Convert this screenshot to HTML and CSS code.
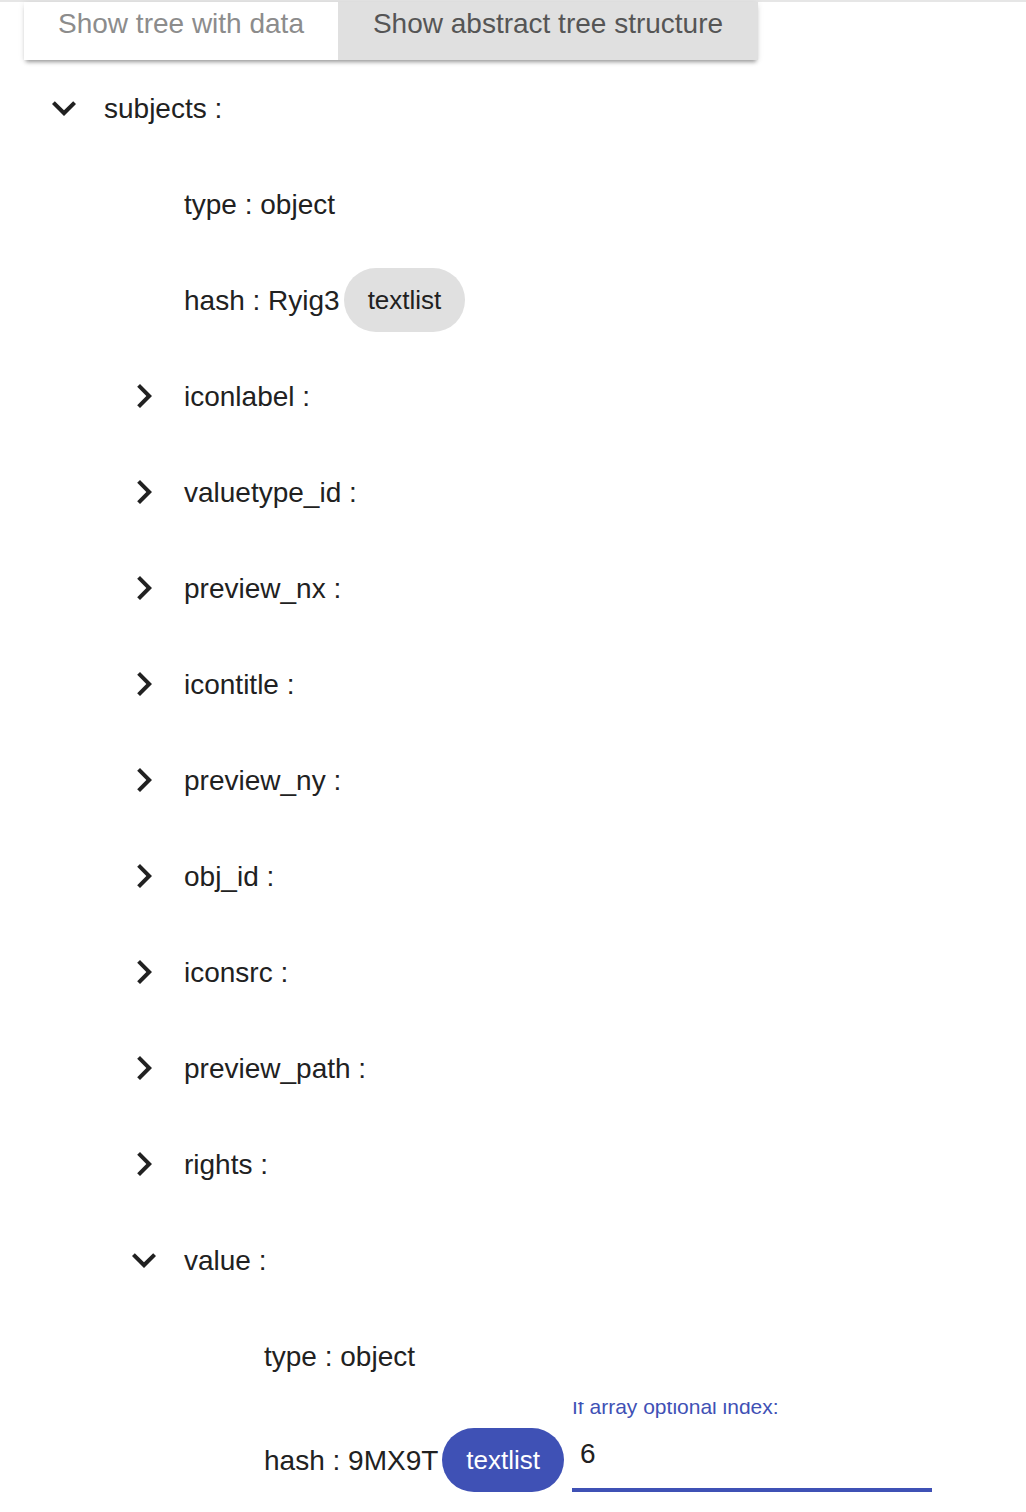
FILE: index.html
```html
<!DOCTYPE html>
<html lang="en">
<head>
<meta charset="utf-8">
<title>Tree</title>
<link rel="stylesheet" href="styles.css">
</head>
<body>
<div class="topband"></div>
<div class="tabs">
  <div class="tab tab-data">Show tree with data</div>
  <div class="tab tab-abstract">Show abstract tree structure</div>
</div>
<ul class="tree">
  <li>
    <div class="row"><span class="toggle"><svg viewBox="0 0 24 24" width="48" height="48"><path d="M16.59 8.59L12 13.17 7.41 8.59 6 10l6 6 6-6z"/></svg></span><span class="label">subjects :</span></div>
    <ul class="children">
      <li><div class="row"><span class="toggle"></span><span class="label">type : object</span></div></li>
      <li><div class="row"><span class="toggle"></span><span class="label">hash : Ryig3</span><span class="chip chip-grey">textlist</span></div></li>
      <li><div class="row"><span class="toggle"><svg viewBox="0 0 24 24" width="48" height="48"><path d="M10 6L8.59 7.41 13.17 12l-4.58 4.59L10 18l6-6z"/></svg></span><span class="label">iconlabel :</span></div></li>
      <li><div class="row"><span class="toggle"><svg viewBox="0 0 24 24" width="48" height="48"><path d="M10 6L8.59 7.41 13.17 12l-4.58 4.59L10 18l6-6z"/></svg></span><span class="label">valuetype_id :</span></div></li>
      <li><div class="row"><span class="toggle"><svg viewBox="0 0 24 24" width="48" height="48"><path d="M10 6L8.59 7.41 13.17 12l-4.58 4.59L10 18l6-6z"/></svg></span><span class="label">preview_nx :</span></div></li>
      <li><div class="row"><span class="toggle"><svg viewBox="0 0 24 24" width="48" height="48"><path d="M10 6L8.59 7.41 13.17 12l-4.58 4.59L10 18l6-6z"/></svg></span><span class="label">icontitle :</span></div></li>
      <li><div class="row"><span class="toggle"><svg viewBox="0 0 24 24" width="48" height="48"><path d="M10 6L8.59 7.41 13.17 12l-4.58 4.59L10 18l6-6z"/></svg></span><span class="label">preview_ny :</span></div></li>
      <li><div class="row"><span class="toggle"><svg viewBox="0 0 24 24" width="48" height="48"><path d="M10 6L8.59 7.41 13.17 12l-4.58 4.59L10 18l6-6z"/></svg></span><span class="label">obj_id :</span></div></li>
      <li><div class="row"><span class="toggle"><svg viewBox="0 0 24 24" width="48" height="48"><path d="M10 6L8.59 7.41 13.17 12l-4.58 4.59L10 18l6-6z"/></svg></span><span class="label">iconsrc :</span></div></li>
      <li><div class="row"><span class="toggle"><svg viewBox="0 0 24 24" width="48" height="48"><path d="M10 6L8.59 7.41 13.17 12l-4.58 4.59L10 18l6-6z"/></svg></span><span class="label">preview_path :</span></div></li>
      <li><div class="row"><span class="toggle"><svg viewBox="0 0 24 24" width="48" height="48"><path d="M10 6L8.59 7.41 13.17 12l-4.58 4.59L10 18l6-6z"/></svg></span><span class="label">rights :</span></div></li>
      <li>
        <div class="row"><span class="toggle"><svg viewBox="0 0 24 24" width="48" height="48"><path d="M16.59 8.59L12 13.17 7.41 8.59 6 10l6 6 6-6z"/></svg></span><span class="label">value :</span></div>
        <ul class="children">
          <li><div class="row"><span class="toggle"></span><span class="label">type : object</span></div></li>
          <li>
            <div class="row row-tall"><span class="toggle"></span><span class="label">hash : 9MX9T</span><span class="chip chip-blue">textlist</span>
              <div class="textfield">
                <label class="tf-label">If array optional index:</label>
                <div class="tf-input">6</div>
                <div class="tf-underline"></div>
              </div>
            </div>
          </li>
        </ul>
      </li>
    </ul>
  </li>
</ul>
</body>
</html>
```

FILE: styles.css
```css
html, body {
  margin: 0;
  padding: 0;
  background: #ffffff;
}
body {
  font-family: "Liberation Sans", Arial, Helvetica, sans-serif;
  color: #212121;
  overflow: hidden;
}
.topband {
  height: 2px;
  background: #e6e6e6;
}
.tabs {
  display: flex;
  margin-left: 24px;
  width: 734px;
  height: 58px;
  background: #ffffff;
  box-shadow: 0 4px 4px -2px rgba(0, 0, 0, 0.35), 0 1px 6px rgba(0, 0, 0, 0.10);
}
.tab {
  box-sizing: border-box;
  height: 58px;
  padding-top: 7px;
  font-size: 28px;
  line-height: 30px;
  text-align: center;
  white-space: nowrap;
}
.tab-data {
  width: 314px;
  background: #ffffff;
  color: #8c8c8c;
}
.tab-abstract {
  width: 420px;
  background: #e0e0e0;
  color: #555555;
}
.tree {
  list-style: none;
  margin: 0;
  padding: 0 0 0 40px;
}
.children {
  list-style: none;
  margin: 0;
  padding: 0 0 0 80px;
}
.row {
  display: flex;
  align-items: center;
  height: 96px;
  white-space: nowrap;
}
.row-tall {
  height: 112px;
}
.toggle {
  display: flex;
  align-items: center;
  justify-content: center;
  width: 48px;
  height: 48px;
  margin-right: 16px;
  flex: none;
}
.toggle svg {
  fill: #212121;
  display: block;
}
.label {
  font-size: 28px;
  line-height: 34px;
  padding-top: 2px;
}
.chip {
  display: inline-flex;
  align-items: center;
  box-sizing: border-box;
  height: 64px;
  border-radius: 32px;
  padding: 0 24px;
  margin-left: 4px;
  font-size: 26px;
}
.chip-grey {
  background: #e0e0e0;
  color: #212121;
}
.chip-blue {
  background: #3f51b5;
  color: #ffffff;
}
.textfield {
  align-self: flex-start;
  margin-top: -2px;
  margin-left: 8px;
  width: 360px;
  height: 90px;
  overflow: hidden;
  display: flex;
  flex-direction: column;
}
.tf-label {
  display: block;
  margin-top: -6px;
  height: 21px;
  font-size: 21px;
  line-height: 21px;
  color: #3f51b5;
}
.tf-input {
  margin-top: 17px;
  padding-left: 8px;
  font-size: 28px;
  line-height: 40px;
  color: #212121;
}
.tf-underline {
  margin-top: auto;
  height: 4px;
  background: #3f51b5;
}
```
